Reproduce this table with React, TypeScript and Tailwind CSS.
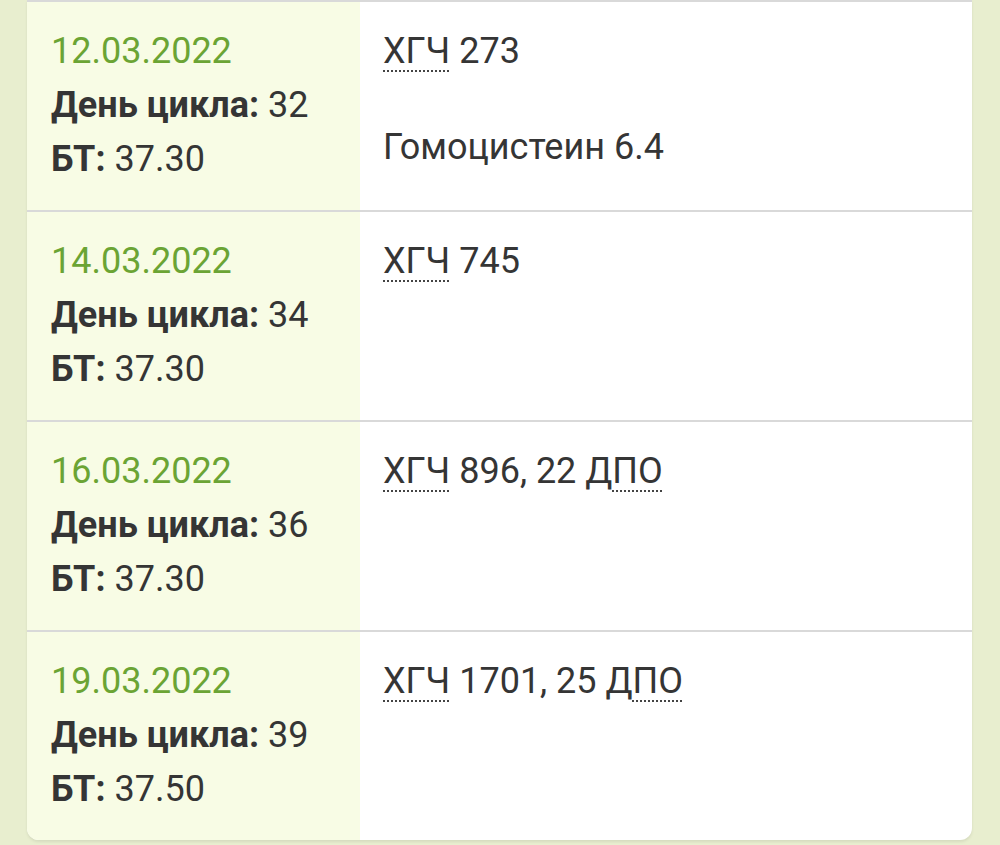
import React from "react";

type Row = {
  date: string;
  day: string;
  bt: string;
  notes: React.ReactNode[];
};

const Abbr = ({ children }: { children: React.ReactNode }) => (
  <span className="underline decoration-dotted decoration-[2px] underline-offset-[7px] decoration-[#444]">
    {children}
  </span>
);

const rows: Row[] = [
  {
    date: "12.03.2022",
    day: "32",
    bt: "37.30",
    notes: [
      <>
        <Abbr>ХГЧ</Abbr> 273
      </>,
      <>Гомоцистеин 6.4</>,
    ],
  },
  {
    date: "14.03.2022",
    day: "34",
    bt: "37.30",
    notes: [
      <>
        <Abbr>ХГЧ</Abbr> 745
      </>,
    ],
  },
  {
    date: "16.03.2022",
    day: "36",
    bt: "37.30",
    notes: [
      <>
        <Abbr>ХГЧ</Abbr> 896, 22 Д<Abbr>ПО</Abbr>
      </>,
    ],
  },
  {
    date: "19.03.2022",
    day: "39",
    bt: "37.50",
    notes: [
      <>
        <Abbr>ХГЧ</Abbr> 1701, 25 Д<Abbr>ПО</Abbr>
      </>,
    ],
  },
];

export default function App() {
  return (
    <div
      className="w-[1000px] h-[845px] bg-[#e8eecf] pl-[27px] pr-[28px] overflow-hidden"
      style={{ fontFamily: "Roboto, 'Noto Sans', sans-serif" }}
    >
      <div className="bg-white rounded-b-[12px] overflow-hidden shadow-[0_2px_3px_rgba(0,0,0,0.08)]">
        {rows.map((r, i) => (
          <div
            key={i}
            className="flex h-[210px] border-t-2 border-[#d9d9d9] text-[36px] leading-[54px] text-[#353535]"
          >
            <div className="w-[333px] shrink-0 bg-[#f8fce5] pl-[24px] pt-[22px]">
              <div className="text-[#6ba434]">{r.date}</div>
              <div>
                <span className="font-bold">День цикла:</span> {r.day}
              </div>
              <div>
                <span className="font-bold">БТ:</span> {r.bt}
              </div>
            </div>
            <div className="flex-1 pl-[23px] pt-[22px]">
              {r.notes.map((n, j) => (
                <div key={j} className={j > 0 ? "mt-[42px]" : ""}>
                  {n}
                </div>
              ))}
            </div>
          </div>
        ))}
      </div>
    </div>
  );
}
